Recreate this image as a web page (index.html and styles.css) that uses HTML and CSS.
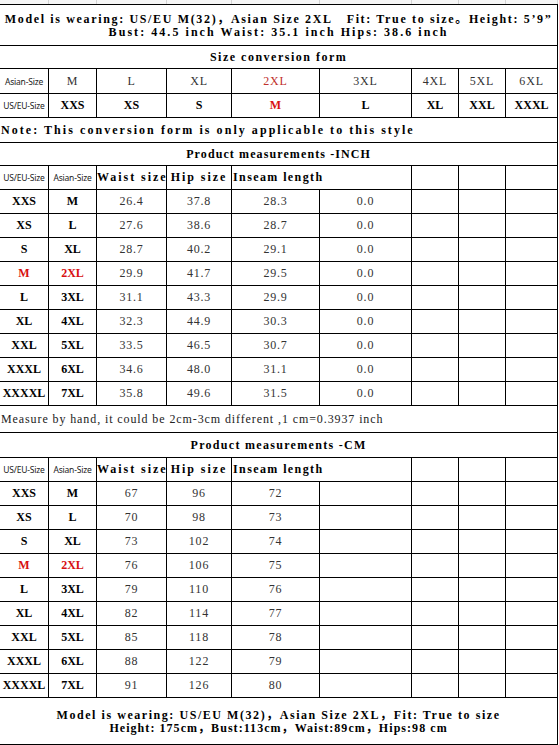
FILE: index.html
```html
<!DOCTYPE html>
<html>
<head>
<meta charset="utf-8">
<title>Size chart</title>
<link rel="stylesheet" href="styles.css">
</head>
<body>
<div class="gridstrip"><span></span><span></span><span></span><span></span><span></span><span></span><span></span><span></span><span></span></div>
<table class="chart">
  <colgroup>
    <col class="c1"><col class="c2"><col class="c3"><col class="c4"><col class="c5"><col class="c6"><col class="c7"><col class="c8"><col class="c9">
  </colgroup>
  <tbody>
    <tr class="h-title">
      <td colspan="9" class="t center title"><span class="ls-a">Model is wearing: US/EU M(32)，Asian Size 2XL&nbsp;&nbsp;&nbsp;Fit: True to size。Height: 5’9”</span><br><span class="ls-b">Bust: 44.5 inch Waist: 35.1 inch Hips: 38.6 inch</span></td>
    </tr>
    <tr class="h23"><td colspan="9" class="t center ls-c">Size conversion form</td></tr>
    <tr class="h25">
      <td class="s">Asian-Size</td><td class="r">M</td><td class="r">L</td><td class="r">XL</td><td class="r red">2XL</td><td class="r">3XL</td><td class="r">4XL</td><td class="r">5XL</td><td class="r">6XL</td>
    </tr>
    <tr class="h24">
      <td class="s">US/EU-Size</td><td class="b">XXS</td><td class="b">XS</td><td class="b">S</td><td class="b redb">M</td><td class="b">L</td><td class="b">XL</td><td class="b">XXL</td><td class="b">XXXL</td>
    </tr>
    <tr class="h25"><td colspan="9" class="t left ls-b">Note: This conversion form is only applicable to this style</td></tr>
    <tr class="h23"><td colspan="9" class="t center ls-d">Product measurements -INCH</td></tr>
    <tr class="h24">
      <td class="s">US/EU-Size</td><td class="s">Asian-Size</td><td class="th">Waist size</td><td class="th">Hip size</td><td colspan="2" class="th left ls-e">Inseam length</td><td></td><td></td><td></td>
    </tr>
    <tr class="h24"><td class="b">XXS</td><td class="b">M</td><td class="r">26.4</td><td class="r">37.8</td><td class="r">28.3</td><td class="r">0.0</td><td></td><td></td><td></td></tr>
    <tr class="h24"><td class="b">XS</td><td class="b">L</td><td class="r">27.6</td><td class="r">38.6</td><td class="r">28.7</td><td class="r">0.0</td><td></td><td></td><td></td></tr>
    <tr class="h24"><td class="b">S</td><td class="b">XL</td><td class="r">28.7</td><td class="r">40.2</td><td class="r">29.1</td><td class="r">0.0</td><td></td><td></td><td></td></tr>
    <tr class="h24"><td class="b redb">M</td><td class="b redb">2XL</td><td class="r">29.9</td><td class="r">41.7</td><td class="r">29.5</td><td class="r">0.0</td><td></td><td></td><td></td></tr>
    <tr class="h24"><td class="b">L</td><td class="b">3XL</td><td class="r">31.1</td><td class="r">43.3</td><td class="r">29.9</td><td class="r">0.0</td><td></td><td></td><td></td></tr>
    <tr class="h24"><td class="b">XL</td><td class="b">4XL</td><td class="r">32.3</td><td class="r">44.9</td><td class="r">30.3</td><td class="r">0.0</td><td></td><td></td><td></td></tr>
    <tr class="h24"><td class="b">XXL</td><td class="b">5XL</td><td class="r">33.5</td><td class="r">46.5</td><td class="r">30.7</td><td class="r">0.0</td><td></td><td></td><td></td></tr>
    <tr class="h24"><td class="b">XXXL</td><td class="b">6XL</td><td class="r">34.6</td><td class="r">48.0</td><td class="r">31.1</td><td class="r">0.0</td><td></td><td></td><td></td></tr>
    <tr class="h24"><td class="b">XXXXL</td><td class="b">7XL</td><td class="r">35.8</td><td class="r">49.6</td><td class="r">31.5</td><td class="r">0.0</td><td></td><td></td><td></td></tr>
    <tr class="h27"><td colspan="9" class="m left">Measure by hand, it could be 2cm-3cm different ,1 cm=0.3937 inch</td></tr>
    <tr class="h25"><td colspan="9" class="t center">Product measurements -CM</td></tr>
    <tr class="h24">
      <td class="s">US/EU-Size</td><td class="s">Asian-Size</td><td class="th">Waist size</td><td class="th">Hip size</td><td colspan="2" class="th left ls-e">Inseam length</td><td></td><td></td><td></td>
    </tr>
    <tr class="h24"><td class="b">XXS</td><td class="b">M</td><td class="r">67</td><td class="r">96</td><td class="r">72</td><td></td><td></td><td></td><td></td></tr>
    <tr class="h24"><td class="b">XS</td><td class="b">L</td><td class="r">70</td><td class="r">98</td><td class="r">73</td><td></td><td></td><td></td><td></td></tr>
    <tr class="h24"><td class="b">S</td><td class="b">XL</td><td class="r">73</td><td class="r">102</td><td class="r">74</td><td></td><td></td><td></td><td></td></tr>
    <tr class="h24"><td class="b redb">M</td><td class="b redb">2XL</td><td class="r">76</td><td class="r">106</td><td class="r">75</td><td></td><td></td><td></td><td></td></tr>
    <tr class="h24"><td class="b">L</td><td class="b">3XL</td><td class="r">79</td><td class="r">110</td><td class="r">76</td><td></td><td></td><td></td><td></td></tr>
    <tr class="h24"><td class="b">XL</td><td class="b">4XL</td><td class="r">82</td><td class="r">114</td><td class="r">77</td><td></td><td></td><td></td><td></td></tr>
    <tr class="h24"><td class="b">XXL</td><td class="b">5XL</td><td class="r">85</td><td class="r">118</td><td class="r">78</td><td></td><td></td><td></td><td></td></tr>
    <tr class="h24"><td class="b">XXXL</td><td class="b">6XL</td><td class="r">88</td><td class="r">122</td><td class="r">79</td><td></td><td></td><td></td><td></td></tr>
    <tr class="h24"><td class="b">XXXXL</td><td class="b">7XL</td><td class="r">91</td><td class="r">126</td><td class="r">80</td><td></td><td></td><td></td><td></td></tr>
    <tr class="h-foot">
      <td colspan="9" class="t center foot"><span class="ls-f">Model is wearing: US/EU M(32)，Asian Size 2XL，Fit: True to size</span><br><span class="ls-g">Height: 175cm，Bust:113cm，Waist:89cm，Hips:98 cm</span></td>
    </tr>
  </tbody>
</table>
</body>
</html>
```

FILE: styles.css
```css
html, body {
  margin: 0;
  padding: 0;
  background: #ffffff;
}

body {
  width: 559px;
  overflow: hidden;
  color: #000;
  font-family: "Liberation Serif", "Noto Sans CJK SC", serif;
}

.gridstrip {
  display: grid;
  grid-template-columns: 49px 48px 70px 65px 88px 92px 47px 47px 52px;
  height: 4px;
  width: 558px;
  background: #f6f6f6;
}

.gridstrip span {
  border-right: 1px solid #d4d4d4;
}

.chart {
  table-layout: fixed;
  width: 558px;
  border-collapse: separate;
  border-spacing: 0;
  border-top: 1px solid #000;
}

.c1 { width: 49px; }
.c2 { width: 48px; }
.c3 { width: 70px; }
.c4 { width: 65px; }
.c5 { width: 88px; }
.c6 { width: 92px; }
.c7 { width: 47px; }
.c8 { width: 47px; }
.c9 { width: 52px; }

.chart td {
  padding: 0;
  border-right: 1px solid #000;
  border-bottom: 1px solid #000;
  text-align: center;
  vertical-align: middle;
  white-space: nowrap;
  overflow: visible;
}

.h-title { height: 41px; }
.h23 { height: 23px; }
.h24 { height: 24px; }
.h25 { height: 25px; }
.h27 { height: 27px; }
.h-foot { height: 47px; }

/* bold text lines (titles, notes) */
.t {
  font-family: "Liberation Serif", "Noto Sans CJK SC", serif;
  font-weight: bold;
  font-size: 12px;
  letter-spacing: 1.3px;
}

.ls-a { letter-spacing: 1.65px; }
.ls-b { letter-spacing: 2.05px; }
.chart td.ls-b { letter-spacing: 2.05px; }
.chart td.ls-c { letter-spacing: 1.5px; }
.chart td.ls-d { letter-spacing: 1.1px; }
.chart td.ls-e { letter-spacing: 1.4px; }
.ls-f { letter-spacing: 1.55px; }
.ls-g { letter-spacing: 1.05px; }

/* bold header cells */
.th {
  font-family: "Liberation Serif", "Noto Sans CJK SC", serif;
  font-weight: bold;
  font-size: 12px;
  letter-spacing: 1.95px;
}

/* bold size letters */
.b {
  font-family: "Liberation Serif", "Noto Sans CJK SC", serif;
  font-weight: bold;
  font-size: 12px;
  letter-spacing: 0;
}

/* regular values */
.r {
  font-family: "Liberation Serif", "Noto Sans CJK SC", serif;
  font-weight: normal;
  font-size: 12px;
  letter-spacing: 0.8px;
  color: #333;
}

/* regular note line */
.m {
  font-family: "Liberation Serif", "Noto Sans CJK SC", serif;
  font-weight: normal;
  font-size: 12px;
  letter-spacing: 0.9px;
  color: #222;
}

.s {
  font-family: "Noto Sans", "Liberation Sans", sans-serif;
  font-size: 8.5px;
  letter-spacing: -0.2px;
  color: #222;
}

.chart td.left {
  text-align: left;
  padding-left: 1px;
}

.chart td.center {
  text-align: center;
}

.chart td.title {
  vertical-align: top;
  line-height: 13px;
  padding-top: 8px;
}

.chart td.foot {
  vertical-align: top;
  line-height: 13px;
  padding-top: 11px;
}

.red { color: #c0302c; }
.redb { color: #d81010; }
```
